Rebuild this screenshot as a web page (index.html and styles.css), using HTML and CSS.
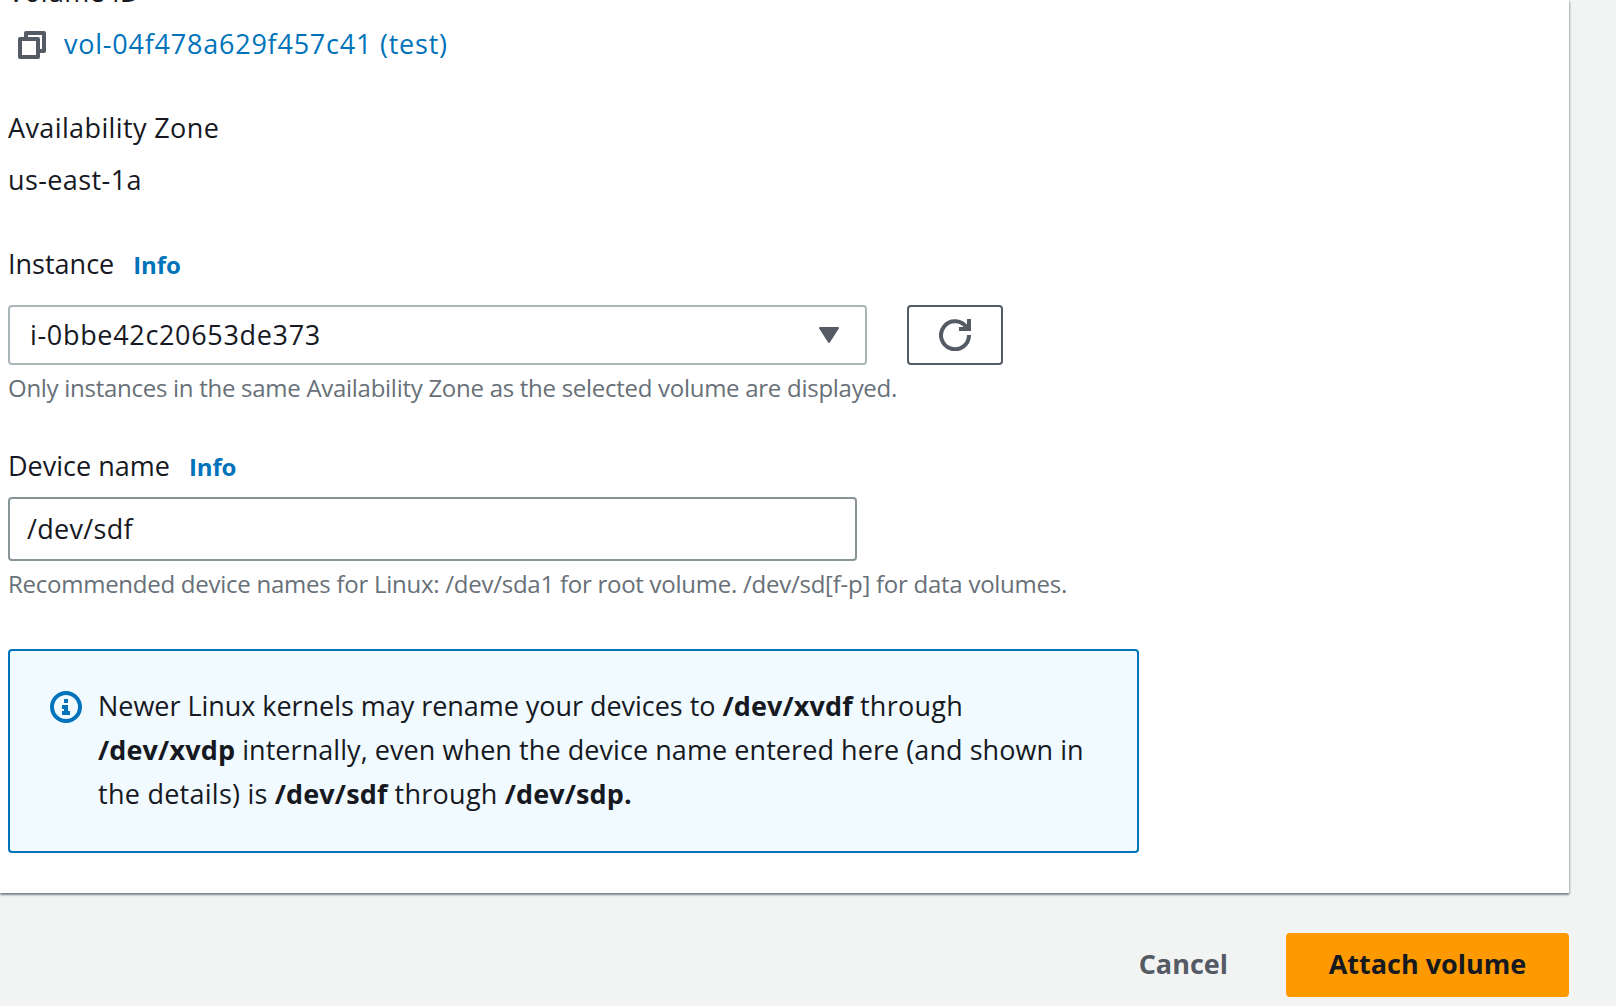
FILE: index.html
```html
<!DOCTYPE html>
<html lang="en">
<head>
<meta charset="utf-8">
<title>Attach volume</title>
<link rel="stylesheet" href="styles.css">
</head>
<body>
<main class="card">
  <section class="field field-volume">
    <div class="label label-volume">Volume ID</div>
    <div class="volume">
      <svg class="copy" width="28" height="28" viewBox="0 0 28 28" fill="none" stroke="currentColor" stroke-width="4" stroke-linejoin="round"><rect x="2" y="8" width="18" height="18"/><path d="M8 6V2h18v18h-4"/></svg>
      <a class="volume-link">vol-04f478a629f457c41 (test)</a>
    </div>
  </section>
  <section class="field field-zone">
    <div class="label label-zone">Availability Zone</div>
    <div class="value">us-east-1a</div>
  </section>
  <section class="field field-instance">
    <div class="label">Instance<a class="info">Info</a></div>
    <div class="controls">
      <div class="select">
        <span class="instance-id">i-0bbe42c20653de373</span>
        <svg width="20" height="16" viewBox="0 0 20 16" fill="currentColor" stroke="currentColor" stroke-width="2" stroke-linejoin="round"><path d="M1 1h18l-9 14z"/></svg>
      </div>
      <button class="refresh" aria-label="Refresh">
        <svg width="32" height="32" viewBox="0 0 32 32" fill="none" stroke="currentColor" stroke-width="4"><path d="M30 16A14 14 0 1 1 28 9"/><path d="M30 0v10H20"/></svg>
      </button>
    </div>
    <p class="hint hint-instance">Only instances in the same Availability Zone as the selected volume are displayed.</p>
  </section>
  <section class="field field-device">
    <div class="label label-device">Device name<a class="info">Info</a></div>
    <input class="input" type="text" value="/dev/sdf">
    <p class="hint">Recommended device names for Linux: /dev/sda1 for root volume. /dev/sd[f-p] for data volumes.</p>
  </section>
  <div class="alert">
    <svg class="alert-icon" width="32" height="32" viewBox="0 0 32 32"><circle cx="16" cy="16" r="14" fill="none" stroke="currentColor" stroke-width="4"/><path fill="currentColor" d="M14 8h4v4h-4zM12 14h6v6h2v4h-8v-4h2v-2h-2z"/></svg>
    <p class="alert-text"><span class="line-start">Newer Linux kernels may rename your devices to</span> <b>/dev/xvdf</b> <span class="line-end">through</span><br><b>/dev/xvdp</b> <span class="line-mid">internally, even when the device name entered here (and shown in</span><br><span class="line-end">the details) is</span> <b>/dev/sdf</b> <span class="line-end">through</span> <b>/dev/sdp.</b></p>
  </div>
</main>
<footer class="actions">
  <button class="cancel">Cancel</button>
  <button class="primary">Attach volume</button>
</footer>
</body>
</html>
```

FILE: styles.css
```css
* { box-sizing: border-box; }
body {
  margin: 0;
  height: 1006px;
  overflow: hidden;
  display: flex;
  flex-direction: column;
  background: #f2f3f3;
  color: #16191f;
  font: 27px/44px "Open Sans", "Noto Sans", sans-serif;
}
p { margin: 0; }
button { font: inherit; cursor: pointer; }
a { color: #0073bb; }
.card {
  height: 893px;
  flex: none;
  margin-right: 47px;
  padding-left: 8px;
  background: #fff;
  box-shadow: 0 2px 2px 0 rgba(0, 28, 36, .4), 1px 1px 2px 0 rgba(0, 28, 36, .2), -2px 1px 2px 0 rgba(0, 28, 36, .1);
}
.field { display: flex; flex-direction: column; }
.field-volume { margin-top: -30px; }
.label-volume { letter-spacing: .15px; }
.volume { display: flex; align-items: center; gap: 18px; margin-top: 8px; padding-left: 10px; }
.copy { color: #545b64; position: relative; top: 1px; }
.volume-link { letter-spacing: .77px; }
.field-zone { margin-top: 40px; }
.label-zone { letter-spacing: .38px; }
.value { margin-top: 8px; letter-spacing: .4px; }
.field-instance { margin-top: 40px; }
.info { margin-left: 19px; font-size: 24px; font-weight: 700; letter-spacing: -.1px; }
.controls { display: flex; gap: 40px; margin-top: 18px; }
.select {
  width: 859px;
  height: 60px;
  display: flex;
  align-items: center;
  justify-content: space-between;
  padding: 0 26px 0 20px;
  border: 2px solid #aab7b8;
  border-radius: 4px;
}
.instance-id { letter-spacing: .67px; }
.select svg { color: #545b64; }
.refresh {
  width: 96px;
  height: 60px;
  display: flex;
  align-items: center;
  justify-content: center;
  padding: 0;
  border: 2px solid #545b64;
  border-radius: 4px;
  background: #fff;
  color: #545b64;
}
.hint { margin-top: 5px; font-size: 24px; line-height: 36px; letter-spacing: -.255px; color: #687078; }
.hint-instance { letter-spacing: -.277px; }
.field-device { margin-top: 38px; }
.label-device { letter-spacing: 0; }
.input {
  width: 849px;
  height: 64px;
  margin-top: 8px;
  padding: 0 17px 2px;
  border: 2px solid #879596;
  border-radius: 4px;
  background: #fff;
  color: inherit;
  font: inherit;
  letter-spacing: .3px;
  outline: none;
}
.alert {
  width: 1131px;
  height: 204px;
  display: flex;
  gap: 16px;
  margin-top: 47px;
  padding: 33px 40px;
  border: 2px solid #0073bb;
  border-radius: 4px;
  background: #f1faff;
}
.alert-icon { flex: none; margin-top: 7px; color: #0073bb; }
.alert-text { white-space: nowrap; }
.alert-text b { letter-spacing: .14px; }
.line-start { letter-spacing: -.04px; }
.line-mid { letter-spacing: .065px; }
.line-end { letter-spacing: .26px; }
.actions { display: flex; justify-content: flex-end; gap: 16px; padding: 40px 47px 0 0; }
.cancel, .primary { height: 64px; border: 0; border-radius: 4px; padding: 0 42px 2px; font-weight: 700; }
.cancel { background: none; color: #545b64; }
.primary { width: 283px; background: #ff9900; color: #16191f; white-space: nowrap; }
```
